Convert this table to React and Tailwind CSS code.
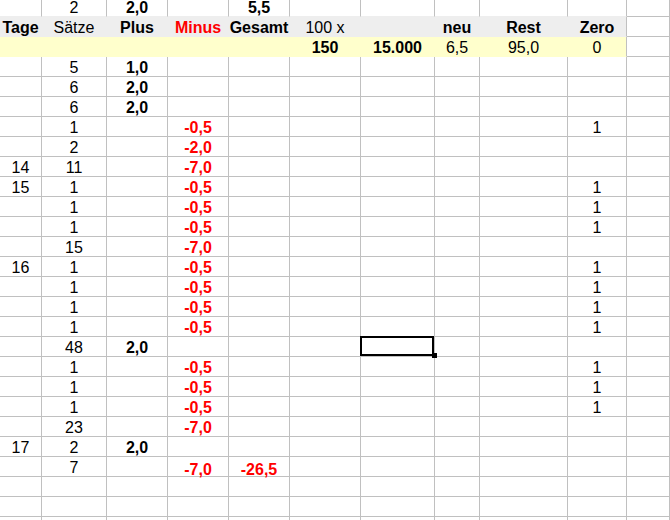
import React from "react";

const cols = "grid-cols-[42px_65px_61px_61px_61px_71px_74px_45px_88px_59px_1fr]";

// cell shorthand: n = normal, b = bold, r = red bold
const n = (t) => ({ t });
const b = (t) => ({ t, b: true });
const r = (t) => ({ t, b: true, r: true });

const minusRow = (sets) => ({ 1: n(sets), 3: r("-0,5"), 9: n("1") });

const rows = [
  { 1: n("2"), 2: b("2,0"), 4: b("5,5") },
  { 1: n("5"), 2: b("1,0") },
  { 1: n("6"), 2: b("2,0") },
  { 1: n("6"), 2: b("2,0") },
  minusRow("1"),
  { 1: n("2"), 3: r("-2,0") },
  { 0: n("14"), 1: n("11"), 3: r("-7,0") },
  { 0: n("15"), ...minusRow("1") },
  minusRow("1"),
  minusRow("1"),
  { 1: n("15"), 3: r("-7,0") },
  { 0: n("16"), ...minusRow("1") },
  minusRow("1"),
  minusRow("1"),
  minusRow("1"),
  { 1: n("48"), 2: b("2,0"), sel: 6 },
  minusRow("1"),
  minusRow("1"),
  minusRow("1"),
  { 1: n("23"), 3: r("-7,0") },
  { 0: n("17"), 1: n("2"), 2: b("2,0") },
  { 1: n("7"), 3: r("-7,0"), 4: r("-26,5"), low: true },
  {},
  {},
  {},
];

const header = [
  b("Tage"),
  n("Sätze"),
  b("Plus"),
  r("Minus"),
  b("Gesamt"),
  n("100 x"),
  {},
  b("neu"),
  b("Rest"),
  b("Zero"),
];

const totals = [{}, {}, {}, {}, {}, b("150"), b("15.000"), n("6,5"), n("95,0"), n("0")];

function Text({ cell }) {
  if (!cell || !cell.t) return null;
  return (
    <span className={(cell.b ? "font-bold " : "") + (cell.r ? "text-[#ff0000]" : "text-black")}>
      {cell.t}
    </span>
  );
}

const base = "h-[20px] border-r border-b leading-[16px] text-center whitespace-nowrap";

function PlainRow({ row, first }) {
  return (
    <div className={`grid ${cols} ${first ? "-mt-[3px]" : ""}`}>
      {Array.from({ length: 11 }).map((_, i) => {
        const cell = row[i];
        const low = row.low && cell && cell.r;
        return (
          <div
            key={i}
            className={`${base} ${low ? "pt-[5px]" : "pt-[3px]"} border-r-[#c0c0c0] ${
              first && i < 10 ? "border-b-[#eeeeee]" : "border-b-[#c0c0c0]"
            } ${row.sel === i ? "relative" : ""}`}
          >
            <Text cell={cell} />
            {row.sel === i && (
              // selected cell frame with fill handle
              <div className="absolute -left-px -top-px w-[74px] h-[20px] border-2 border-black">
                <div className="absolute -right-[5px] -bottom-[4px] w-[5px] h-[5px] bg-black" />
              </div>
            )}
          </div>
        );
      })}
    </div>
  );
}

function BandRow({ cells, bg, line }) {
  return (
    <div className={`grid ${cols}`}>
      {cells.map((c, i) => (
        <div
          key={i}
          className={`${base} pt-[3px] ${bg} ${line} ${i === 9 ? "border-r-[#c0c0c0]" : ""}`}
        >
          <Text cell={c} />
        </div>
      ))}
      <div className={`${base} border-[#c0c0c0]`} />
    </div>
  );
}

export default function App() {
  return (
    <div
      className="w-[670px] h-[520px] overflow-hidden bg-white text-[16px]"
      style={{ fontFamily: '"Liberation Sans", Arial, sans-serif' }}
    >
      <PlainRow row={rows[0]} first />
      <BandRow cells={header} bg="bg-[#eeeeee]" line="border-[#eeeeee]" />
      <BandRow cells={totals} bg="bg-[#ffffcc]" line="border-[#ffffcc]" />
      {rows.slice(1).map((row, i) => (
        <PlainRow key={i} row={row} />
      ))}
    </div>
  );
}
